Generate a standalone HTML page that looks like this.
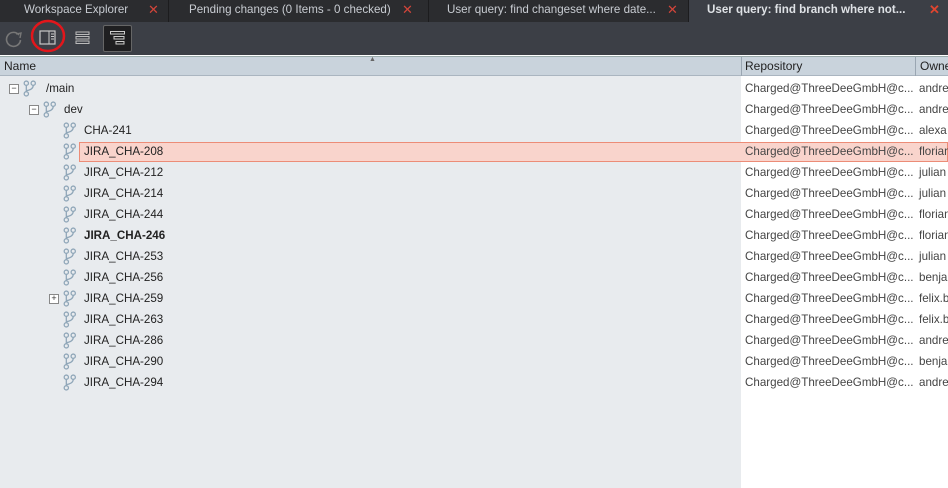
<!DOCTYPE html>
<html><head><style>
body{margin:0;width:948px;height:488px;overflow:hidden;background:#fff;font-family:"Liberation Sans",sans-serif;font-size:11.3px;position:relative}
.tabs{position:absolute;left:0;top:0;width:948px;height:22px;background:#2b2c2f}
.tab{position:absolute;top:0;height:22px;line-height:19px;color:#c8ccd2;font-size:11.6px;border-right:1px solid #1c1c1e;box-sizing:border-box;white-space:nowrap}
.x{position:absolute;top:0;color:#d2453a;font-size:13px}
.tool{position:absolute;left:0;top:22px;width:948px;height:33px;background:#3c3f46}
.hdr{position:absolute;top:56px;height:20px;left:0;width:948px;background:#c9d3dc;border-top:1px solid #9aa;border-bottom:1px solid #aab5c0;box-sizing:border-box;font-size:12px}
.hdr span{position:absolute;top:2px;color:#222}
.left{position:absolute;left:0;top:76px;width:741px;height:412px;background:#e8ebee}
.row{position:absolute;height:21px;line-height:21px;color:#222;font-size:11.6px}
.br{position:absolute;width:13px;height:17px}
.c{position:absolute;color:#444;font-size:11.6px;white-space:nowrap}
</style></head><body>
<div class="tabs">
 <div class="tab" style="left:0;width:169px;padding-left:24px">Workspace Explorer<span class="x" style="left:148px">✕</span></div>
 <div class="tab" style="left:169px;width:260px;padding-left:20px">Pending changes (0 Items - 0 checked)<span class="x" style="left:233px">✕</span></div>
 <div class="tab" style="left:429px;width:260px;padding-left:18px">User query: find changeset where date...<span class="x" style="left:238px">✕</span></div>
 <div class="tab" style="left:689px;width:259px;padding-left:18px;background:#3c3f46;color:#dfe2e6;border:none;font-weight:bold">User query: find branch where not...<span class="x" style="left:240px;color:#e0452f">✕</span></div>
</div>
<div class="tool">
 <svg style="position:absolute;left:5px;top:8px" width="18" height="18"><path d="M14 5 A7 7 0 1 0 15.5 10" fill="none" stroke="#777" stroke-width="1.6"/><path d="M11 4 L16 3 L15 8" fill="none" stroke="#777" stroke-width="1.4"/></svg>
 <svg style="position:absolute;left:39px;top:8px" width="18" height="16"><rect x="1" y="1" width="15" height="13" fill="none" stroke="#c8c8c8" stroke-width="1.2"/><line x1="10" y1="1" x2="10" y2="14" stroke="#c8c8c8"/><line x1="12" y1="4" x2="15" y2="4" stroke="#ccc"/><line x1="12" y1="6.5" x2="15" y2="6.5" stroke="#ccc"/><line x1="12" y1="9" x2="15" y2="9" stroke="#ccc"/></svg>
 <svg style="position:absolute;left:28px;top:-5px" width="42" height="38"><ellipse cx="20" cy="19" rx="16" ry="15" fill="none" stroke="#e3161b" stroke-width="2.5"/></svg>
 <svg style="position:absolute;left:75px;top:9px" width="16" height="14"><rect x="1" y="1" width="13" height="2.5" fill="none" stroke="#bbb"/><rect x="1" y="5.5" width="13" height="2.5" fill="none" stroke="#bbb"/><rect x="1" y="10" width="13" height="2.5" fill="none" stroke="#bbb"/></svg>
 <div style="position:absolute;left:103px;top:3px;width:29px;height:27px;background:#1f1f21;border:1px solid #666;border-radius:2px;box-sizing:border-box"></div>
 <svg style="position:absolute;left:110px;top:9px" width="16" height="15"><rect x="0.5" y="0.5" width="14" height="2.5" fill="none" stroke="#ccc"/><rect x="4" y="5.5" width="10" height="2.5" fill="none" stroke="#ccc"/><rect x="6" y="10.5" width="8" height="2.5" fill="none" stroke="#ccc"/></svg>
</div>
<div class="hdr">
 <span style="left:4px">Name</span><span style="left:369px;top:-1px;font-size:7px;color:#666">▲</span>
 <div style="position:absolute;left:741px;top:0;height:19px;border-left:1px solid #9aa6b2"></div><span style="left:745px">Repository</span>
 <div style="position:absolute;left:915px;top:0;height:19px;border-left:1px solid #9aa6b2"></div><span style="left:920px">Owner</span>
</div>
<div class="left"></div>
<div id="rows"></div>
<script>
const rows=[["/main",0,"andre",1],["dev",1,"andre",1],["CHA-241",2,"alexa"],["JIRA_CHA-208",2,"florian"],["JIRA_CHA-212",2,"julian"],["JIRA_CHA-214",2,"julian"],["JIRA_CHA-244",2,"florian"],["JIRA_CHA-246",2,"florian"],["JIRA_CHA-253",2,"julian"],["JIRA_CHA-256",2,"benja"],["JIRA_CHA-259",2,"felix.b",2],["JIRA_CHA-263",2,"felix.b"],["JIRA_CHA-286",2,"andre"],["JIRA_CHA-290",2,"benja"],["JIRA_CHA-294",2,"andre"]];
let h="";
rows.forEach((r,i)=>{const y=78+i*21,ind=r[1]*20;
if(i==3)h+=`<div style="position:absolute;left:79px;top:${y+1}px;width:869px;height:20px;background:#f9d4cc;border:1px solid #ec8c77;box-sizing:border-box"></div>`;
if(r[3]){h+=`<div style="position:absolute;left:${9+ind}px;top:${y+6}px;width:8px;height:8px;border:1px solid #888;background:#fff;font-size:9px;line-height:7px;text-align:center;color:#333">${r[3]==2?'+':'−'}</div>`;}
h+=`<svg class="br" style="left:${23+ind}px;top:${y+2}px" viewBox="0 0 12 16"><circle cx="3" cy="3" r="2" fill="none" stroke="#8fa6b8" stroke-width="1.2"/><circle cx="9.5" cy="3" r="2" fill="none" stroke="#8fa6b8" stroke-width="1.2"/><circle cx="3" cy="13" r="2" fill="none" stroke="#8fa6b8" stroke-width="1.2"/><path d="M3 5V11M9.5 5Q9.5 9 3 10" fill="none" stroke="#8fa6b8" stroke-width="1.2"/></svg>`;
h+=`<div class="row" style="left:${44+ind+(r[1]?0:2)}px;top:${y}px;${i==7?'font-weight:bold':''}">${r[0]}</div>`;
h+=`<div class="c" style="left:745px;top:${y+4}px">Charged@ThreeDeeGmbH@c...</div><div class="c" style="left:919px;top:${y+4}px">${r[2]}</div>`;});
document.getElementById('rows').innerHTML=h;
</script>
</body></html>
